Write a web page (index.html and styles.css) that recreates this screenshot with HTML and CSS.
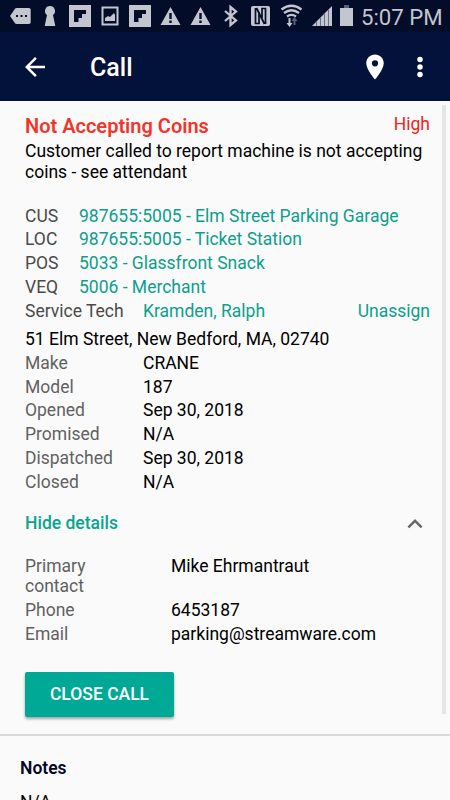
FILE: index.html
```html
<!DOCTYPE html>
<html lang="en">
<head>
    <meta charset="UTF-8">
    <meta name="viewport" content="width=device-width, initial-scale=1.0">
    <link rel="stylesheet" href="styles.css">
    <title>Call</title>
</head>
<body>
    <div class="status-bar">
        <svg class="status-icons" width="356" height="34" viewBox="0 0 356 34" fill="#c3c5cf">
            <!-- message -->
            <path d="M10 16l5-7.2q.6-.8 1.600-.8H29q1.700 0 1.700 1.700v12.600q0 1.700-1.700 1.700H16.600q-1 0-1.600-.8z"/>
            <path fill="#030c28" d="M16 15h2v2h-2zM20.500 15h2v2h-2zM25 15h2v2h-2z"/>
            <!-- keyhole -->
            <path d="M50 6a5 5 0 0 1 3 9l2.300 11H44.700L47 15a5 5 0 0 1 3-9z"/>
            <!-- flipboard -->
            <path fill-rule="evenodd" d="M69 5h22v22H69zM74 10v12h4.500v-4H82v-4h4v-4z"/>
            <!-- picture -->
            <path fill-rule="evenodd" d="M101.500 6.500h17v19h-17zM103.500 8.500v15h13v-15z"/>
            <path d="M105 21v-3l3-2 2 1 4-4 1 2v6z"/>
            <path fill-rule="evenodd" d="M129 5h22v22h-22zM134 10v12h4.500v-4h3.500v-4h4v-4z"/>
            <!-- warnings -->
            <path fill-rule="evenodd" d="M170.500 7l10 18h-20zM169.300 13v6h2.400v-6zM169.300 20.500v2.500h2.400v-2.500z"/>
            <path fill-rule="evenodd" d="M200.500 7l10 18h-20zM199.300 13v6h2.400v-6zM199.300 20.500v2.500h2.400v-2.500z"/>
            <!-- bluetooth -->
            <path fill="none" stroke="#c3c5cf" stroke-width="2.300" d="M225 11l11 9.500-5.500 4.500V7l5.500 4.500L225 21"/>
            <!-- nfc -->
            <rect x="251" y="6" width="19" height="20" rx="2"/>
            <path fill="none" stroke="#030c28" stroke-width="1.700" d="M255.500 8v15.500h3.500V13l5.500 11M265.500 24V8.500H262V19L256.500 8"/>
            <!-- wifi -->
            <path fill="none" stroke="#c3c5cf" stroke-width="2.300" d="M281.500 9.500q10-7.500 20 0M284 13q7.500-5.500 15 0M287 16.500q4.500-3.200 9 0"/>
            <path d="M288.500 18h2v5h2l-3 4-3-4h2z"/>
            <path fill="#59617a" d="M293.500 25v-4h-2l3-4 3 4h-2v4z"/>
            <!-- signal -->
            <path d="M312 26l20-20v20z"/>
            <path stroke="#68708a" stroke-width="1" d="M316.500 22v4M320.500 18v8M324.500 14v12M328.500 10v16"/>
            <!-- battery -->
            <path fill="#59617a" d="M344 5h5v3h-5z"/>
            <path d="M340 8h13v18h-13z"/>
        </svg>
        <span class="clock">5:07 PM</span>
    </div>

    <header>
        <svg class="back" width="30" height="30" viewBox="0 0 24 24"><path fill="#fff" d="M20 11H7.830l5.590-5.590L12 4l-8 8 8 8 1.410-1.410L7.830 13H20v-2z"/></svg>
        <h1>Call</h1>
        <svg class="pin" width="30" height="30" viewBox="0 0 24 24"><path fill="#fff" d="M12 2C8.130 2 5 5.130 5 9c0 5.250 7 13 7 13s7-7.750 7-13c0-3.870-3.130-7-7-7zm0 9.500a2.500 2.500 0 0 1 0-5 2.500 2.500 0 0 1 0 5z"/></svg>
        <svg class="more" width="30" height="30" viewBox="0 0 24 24" fill="#fff"><circle cx="12" cy="6" r="2.200"/><circle cx="12" cy="12" r="2.200"/><circle cx="12" cy="18" r="2.200"/></svg>
    </header>

    <main class="call">
        <div class="call-title">
            <h2>Not Accepting Coins</h2>
            <span class="priority">High</span>
        </div>
        <p class="description">Customer called to report machine is not accepting coins - see attendant</p>

        <div class="links">
            <div class="row"><span class="label">CUS</span><a>987655:5005 - Elm Street Parking Garage</a></div>
            <div class="row"><span class="label">LOC</span><a>987655:5005 - Ticket Station</a></div>
            <div class="row"><span class="label">POS</span><a>5033 - Glassfront Snack</a></div>
            <div class="row"><span class="label">VEQ</span><a>5006 - Merchant</a></div>
            <div class="row tech"><span class="label">Service Tech</span><a>Kramden, Ralph</a><a class="unassign">Unassign</a></div>
        </div>

        <div class="info">
            <div class="row address">51 Elm Street, New Bedford, MA, 02740</div>
            <div class="row"><span class="label">Make</span><span>CRANE</span></div>
            <div class="row"><span class="label">Model</span><span>187</span></div>
            <div class="row"><span class="label">Opened</span><span>Sep 30, 2018</span></div>
            <div class="row"><span class="label">Promised</span><span>N/A</span></div>
            <div class="row"><span class="label">Dispatched</span><span>Sep 30, 2018</span></div>
            <div class="row"><span class="label">Closed</span><span>N/A</span></div>
        </div>

        <div class="toggle">
            <span>Hide details</span>
            <svg width="30" height="30" viewBox="0 0 24 24"><path fill="#666" d="M12 8l-6 6 1.410 1.410L12 10.830l4.590 4.580L18 14z"/></svg>
        </div>

        <div class="contact">
            <div class="row"><span class="label">Primary<br>contact</span><span>Mike Ehrmantraut</span></div>
            <div class="row"><span class="label">Phone</span><span>6453187</span></div>
            <div class="row"><span class="label">Email</span><span>parking@streamware.com</span></div>
        </div>

        <button>CLOSE CALL</button>
        <div class="scrollbar"></div>
    </main>

    <section class="notes">
        <h3>Notes</h3>
        <p>N/A</p>
    </section>
</body>
</html>
```
FILE: styles.css
```css
/* Global Styles */
* {
    box-sizing: border-box;
}

body {
    font-family: Roboto, sans-serif;
    font-size: 17.5px;
    line-height: 20.5px;
    margin: 0;
    height: 800px;
    overflow: hidden;
    background-color: #fafafa;
    color: #000;
}

h1, h2, h3, p {
    margin: 0;
}

/* Header */
.status-bar {
    display: flex;
    height: 32px;
    background-color: #030c28;
    color: #c3c5cf;
}

.status-icons {
    flex: none;
}

.clock {
    margin-left: 5px;
    font-size: 22.2px;
    line-height: 34px;
    white-space: nowrap;
}

header {
    display: flex;
    align-items: center;
    height: 69px;
    padding: 0 15px 0 20px;
    background-color: #03123a;
    color: #fff;
}

h1 {
    flex: 1;
    margin: 2px 0 0 40px;
    font-size: 25px;
    line-height: 30px;
    font-weight: 500;
}

.pin {
    margin-right: 15px;
}

/* Main Content */
.call {
    position: relative;
    height: 635px;
    padding: 13px 20px 0 25px;
    border-bottom: 2px solid #d9d9d9;
}

.call-title {
    display: flex;
    justify-content: space-between;
    height: 27px;
}

h2 {
    font-size: 20px;
    line-height: 24px;
    font-weight: 600;
    color: #f4342a;
}

.priority {
    color: #f4211b;
}

.description {
    height: 64.500px;
}

.row {
    display: flex;
    margin-bottom: 3.250px;
}

.label {
    flex: none;
    width: 118px;
    color: #616161;
}

.links .label {
    width: 54px;
    color: #4a4a4a;
}

.links .tech .label {
    width: 118px;
}

a {
    color: #0ba08c;
}

.unassign {
    margin-left: auto;
}

.info {
    margin-top: 8px;
}

.toggle {
    display: flex;
    align-items: center;
    justify-content: space-between;
    height: 30px;
    margin-top: 16.500px;
    font-weight: 500;
    color: #08a58f;
}

.contact {
    margin-top: 17px;
}

.contact .label {
    width: 146px;
}

button {
    display: block;
    width: 149px;
    height: 44.500px;
    margin-top: 28px;
    padding: 0;
    border: none;
    border-radius: 2px;
    background-color: #00a896;
    color: #fff;
    font: 500 17.5px/44px Roboto, sans-serif;
    box-shadow: 0 2px 3px rgba(0, 0, 0, 0.35);
}

.scrollbar {
    position: absolute;
    top: 4px;
    right: 4px;
    width: 4px;
    height: 609px;
    background-color: #e5e5e5;
}

/* Notes */
.notes {
    padding: 22px 20px 0;
}

h3 {
    font-size: 17.5px;
    font-weight: 600;
    color: #03082b;
}

.notes p {
    margin-top: 13px;
}
```
